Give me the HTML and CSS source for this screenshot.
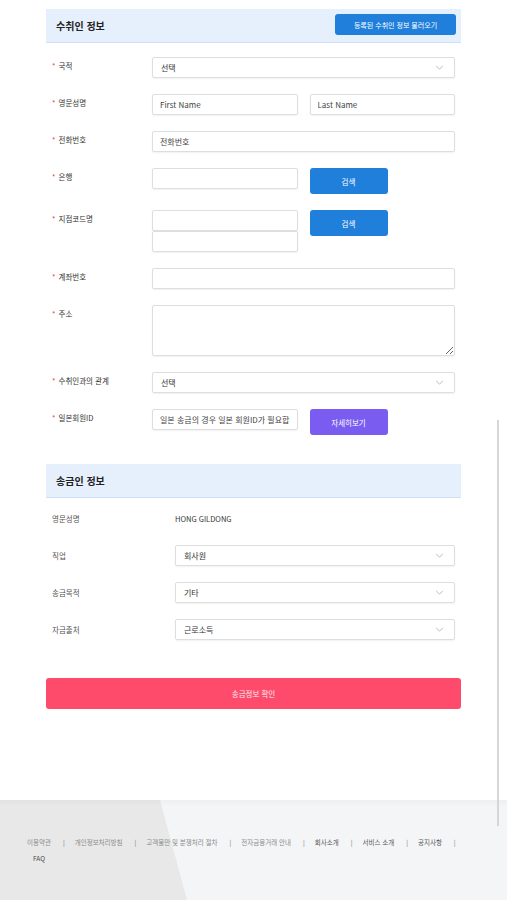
FILE: index.html
```html
<!DOCTYPE html>
<html lang="ko">
<head>
<meta charset="utf-8">
<title>송금 정보</title>
<link rel="stylesheet" href="styles.css">
</head>
<body>
<div class="page">
  <main class="content">
    <section class="panel">
      <div class="panel-head">
        <h2>수취인 정보</h2>
        <button class="btn btn-blue btn-load">등록된 수취인 정보 불러오기</button>
      </div>
      <div class="form">
        <div class="row">
          <label class="req">국적</label>
          <div class="select"><span>선택</span><svg class="chev" viewBox="0 0 10 6"><path d="M1 1l4 4 4-4"/></svg></div>
        </div>
        <div class="row">
          <label class="req">영문성명</label>
          <div class="pair">
            <input class="field" placeholder="First Name">
            <input class="field" placeholder="Last Name">
          </div>
        </div>
        <div class="row">
          <label class="req">전화번호</label>
          <input class="field" placeholder="전화번호">
        </div>
        <div class="row">
          <label class="req">은행</label>
          <div class="pair">
            <input class="field">
            <button class="btn btn-blue btn-side">검색</button>
          </div>
        </div>
        <div class="row">
          <label class="req">지점코드명</label>
          <div class="pair">
            <div class="stack">
              <input class="field">
              <input class="field">
            </div>
            <button class="btn btn-blue btn-side">검색</button>
          </div>
        </div>
        <div class="row">
          <label class="req">계좌번호</label>
          <input class="field">
        </div>
        <div class="row">
          <label class="req">주소</label>
          <textarea class="field area"></textarea>
        </div>
        <div class="row">
          <label class="req">수취인과의 관계</label>
          <div class="select"><span>선택</span><svg class="chev" viewBox="0 0 10 6"><path d="M1 1l4 4 4-4"/></svg></div>
        </div>
        <div class="row">
          <label class="req">일본회원ID</label>
          <div class="pair">
            <input class="field" placeholder="일본 송금의 경우 일본 회원ID가 필요합니다">
            <button class="btn btn-purple btn-side">자세히보기</button>
          </div>
        </div>
      </div>
    </section>

    <section class="panel panel-sender">
      <div class="panel-head">
        <h2>송금인 정보</h2>
      </div>
      <div class="form form-sender">
        <div class="row">
          <label>영문성명</label>
          <span class="value">HONG GILDONG</span>
        </div>
        <div class="row">
          <label>직업</label>
          <div class="select"><span>회사원</span><svg class="chev" viewBox="0 0 10 6"><path d="M1 1l4 4 4-4"/></svg></div>
        </div>
        <div class="row">
          <label>송금목적</label>
          <div class="select"><span>기타</span><svg class="chev" viewBox="0 0 10 6"><path d="M1 1l4 4 4-4"/></svg></div>
        </div>
        <div class="row">
          <label>자금출처</label>
          <div class="select"><span>근로소득</span><svg class="chev" viewBox="0 0 10 6"><path d="M1 1l4 4 4-4"/></svg></div>
        </div>
      </div>
    </section>

    <button class="btn btn-submit">송금정보 확인</button>
  </main>

  <footer class="footer">
    <ul class="links">
      <li class="light">이용약관</li>
      <li class="light">개인정보처리방침</li>
      <li class="light">고객불만 및 분쟁처리 절차</li>
      <li class="light">전자금융거래 안내</li>
      <li>회사소개</li>
      <li>서비스 소개</li>
      <li>공지사항</li>
      <li class="faq">FAQ</li>
    </ul>
  </footer>
</div>
<div class="scroll-line"></div>
</body>
</html>
```

FILE: styles.css
```css
* { box-sizing: border-box; }
html, body {
  margin: 0;
  padding: 0;
  height: 900px;
  overflow: hidden;
  background: #fff;
}
body {
  font-family: "Noto Sans CJK KR", "Noto Sans", sans-serif;
  color: #333;
}
.page {
  width: 507px;
  height: 900px;
  display: flex;
  flex-direction: column;
}
.content {
  padding: 9px 46px 0;
  flex: 1;
  display: flex;
  flex-direction: column;
}
.panel-head {
  height: 34px;
  background: #e6f0fc;
  border-bottom: 1px solid #cfe1f6;
  display: flex;
  align-items: center;
  justify-content: space-between;
  padding: 0 5px 0 10px;
}
.panel-head h2 {
  margin: 0;
  font-size: 10px;
  font-weight: 700;
  color: #222;
}
.btn {
  border: 0;
  font-family: inherit;
  color: #fff;
  border-radius: 3px;
  cursor: pointer;
  padding: 0;
}
.btn-blue { background: #1f7fdb; }
.btn-purple { background: #7a5df0; }
.btn-load {
  width: 121px;
  height: 21px;
  font-size: 7px;
  margin-top: -2px;
}
.btn-side {
  width: 78px;
  height: 26px;
  font-size: 7.5px;
}
.form {
  display: flex;
  flex-direction: column;
  gap: 16px;
  padding: 14px 6px 0 6px;
}
.row {
  display: grid;
  grid-template-columns: 100px 1fr;
  align-items: start;
}
.row > label {
  font-size: 7.5px;
  line-height: 17px;
  color: #333;
}
.row > label.req::before {
  content: "*";
  color: #e8374f;
  margin-right: 3px;
}
.field {
  display: block;
  width: 100%;
  height: 21px;
  border: 1px solid #dedede;
  border-radius: 2px;
  box-shadow: 0 1px 2px rgba(0, 0, 0, 0.06);
  background: #fff;
  padding: 0 7px;
  font-family: inherit;
  font-size: 8px;
  color: #333;
  outline: none;
}
.field::placeholder { color: #444; }
.area {
  height: 51px;
  resize: vertical;
}
.select {
  height: 21px;
  border: 1px solid #dedede;
  border-radius: 2px;
  box-shadow: 0 1px 2px rgba(0, 0, 0, 0.06);
  display: flex;
  align-items: center;
  justify-content: space-between;
  padding: 0 10px 0 8px;
  font-size: 8px;
  color: #333;
}
.chev {
  width: 9px;
  height: 5px;
  fill: none;
  stroke: #b5b5b5;
  stroke-width: 1.1;
}
.pair {
  display: grid;
  grid-template-columns: 1fr 1fr;
  column-gap: 12px;
  align-items: start;
}
.stack {
  display: flex;
  flex-direction: column;
}
.panel-sender { margin-top: 29px; }
.form-sender { padding-top: 10px; }
.form-sender .row {
  grid-template-columns: 123px 1fr;
  align-items: center;
  min-height: 21px;
}
.form-sender .row > label { color: #555; }
.value {
  font-size: 7.5px;
  color: #333;
}
.btn-submit {
  margin-top: 38px;
  height: 31px;
  width: 100%;
  background: #fe4b6b;
  font-size: 7.5px;
  color: #ffe9ee;
}
.footer {
  position: relative;
  height: 100px;
  background: linear-gradient(#efefef, #f4f5f6 6px);
  overflow: hidden;
}
.footer::before {
  content: "";
  position: absolute;
  inset: 0;
  background: linear-gradient(#e2e2e2, #e8e8e8 6px);
  clip-path: polygon(0 0, 160px 0, 187px 100%, 0 100%);
}
.links {
  position: relative;
  list-style: none;
  margin: 0;
  padding: 34px 0 0 27px;
  display: flex;
  flex-wrap: wrap;
  font-size: 6.5px;
  line-height: 16px;
  color: #555;
}
.links li::after {
  content: "|";
  margin: 0 10px 0 12px;
  color: #777;
}
.links li.light { color: #8a8a8a; }
.links li.faq {
  flex-basis: 100%;
  padding-left: 6px;
  color: #444;
}
.links li.faq::after { content: none; }
.scroll-line {
  position: fixed;
  left: 497px;
  top: 420px;
  width: 2px;
  height: 406px;
  background: #d6d6d6;
}
```
